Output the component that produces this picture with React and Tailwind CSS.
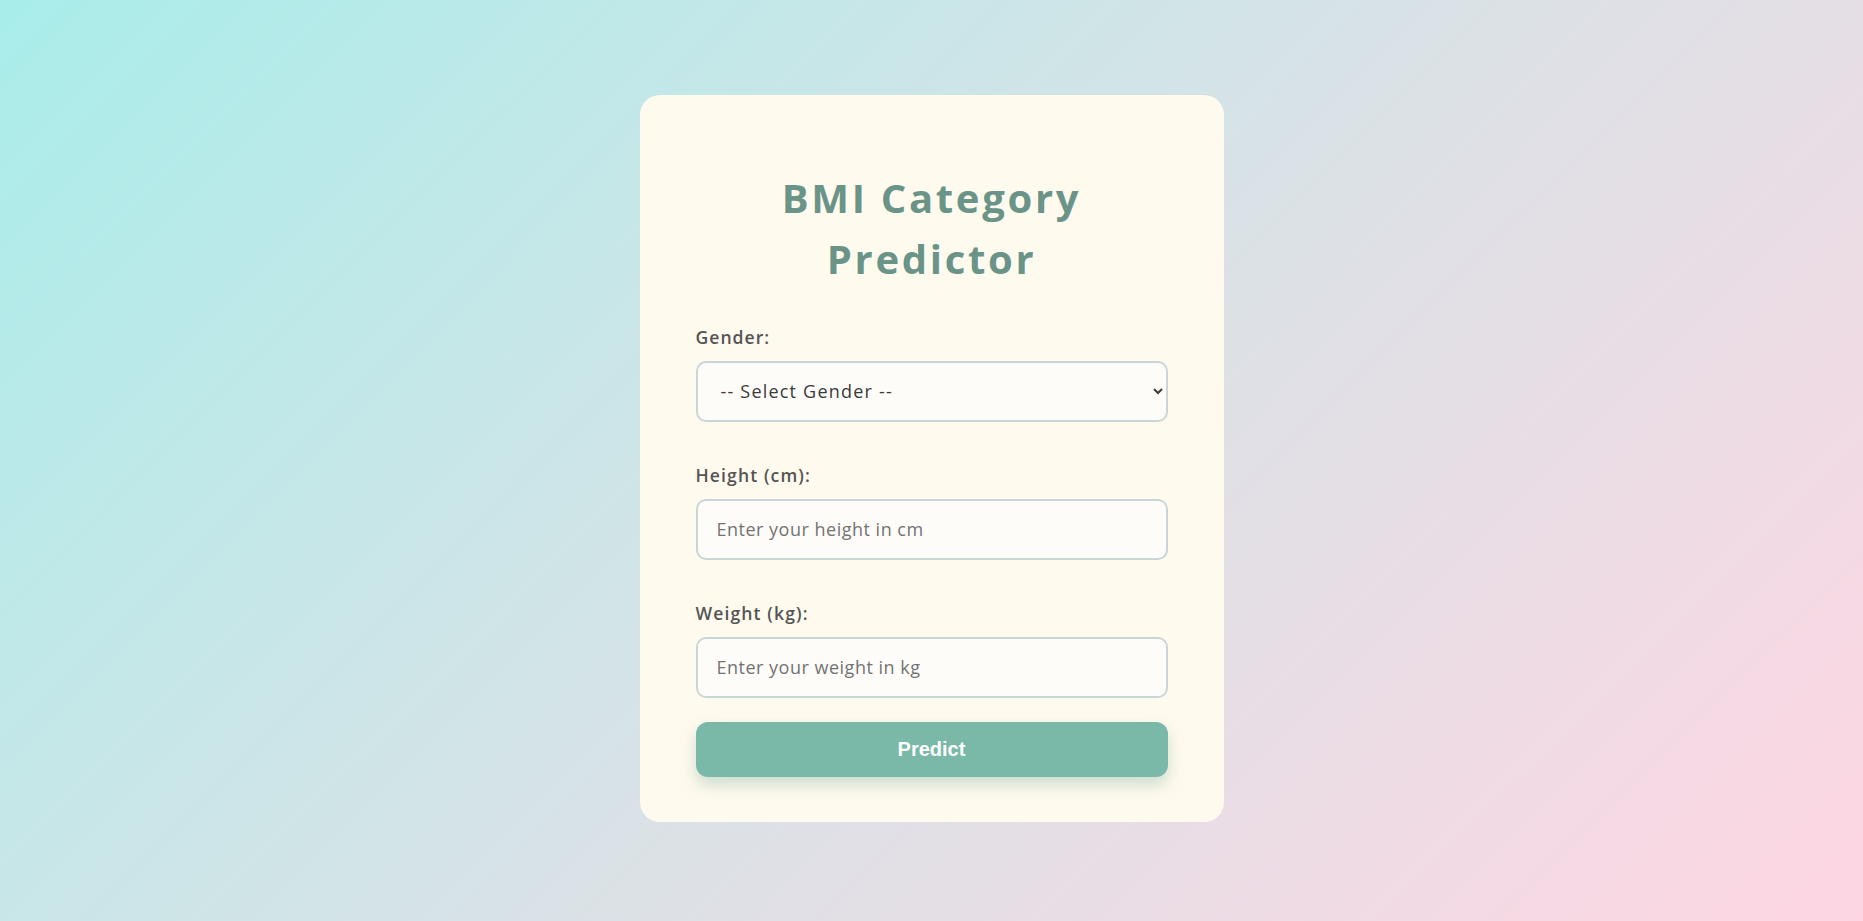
import React, { useState } from "react";

const App = () => {
  const [gender, setGender] = useState("");
  const [height, setHeight] = useState("");
  const [weight, setWeight] = useState("");

  const submit = (e) => {
    e.preventDefault();
  };

  return (
    <div className="min-h-screen w-full flex items-center justify-center pb-[5px] bg-linear-135 from-[#a8edea] to-[#fed6e3] font-['Open_Sans',sans-serif]">
      <div className="w-[584px] bg-[#fffaee] rounded-[20px] px-[56px] pt-[72px] pb-[45px]">
        <h1 className="text-center text-[40px] leading-[61px] font-bold tracking-[2.7px] text-[#6a9488] mb-[36px]">
          BMI Category
          <br />
          Predictor
        </h1>

        <form onSubmit={submit}>
          <div className="mb-[41px]">
            <label className="block text-[17.6px] leading-[24px] font-semibold text-[#555] mb-[12px] tracking-[1px]">
              Gender:
            </label>
            <select
              value={gender}
              onChange={(e) => setGender(e.target.value)}
              className="w-full h-[61px] pl-[19px] pr-[16px] border-2 border-[#c9d6d8] rounded-[10px] bg-[#fdfcf8] text-[18px] text-[#3a3a3a] tracking-[1.2px]"
            >
              <option value="">-- Select Gender --</option>
              <option value="Male">Male</option>
              <option value="Female">Female</option>
            </select>
          </div>

          <div className="mb-[41px]">
            <label className="block text-[17.6px] leading-[24px] font-semibold text-[#555] mb-[12px] tracking-[1.1px]">
              Height (cm):
            </label>
            <input
              type="number"
              value={height}
              onChange={(e) => setHeight(e.target.value)}
              placeholder="Enter your height in cm"
              className="w-full h-[61px] pl-[19px] pr-[17px] border-2 border-[#c9d6d8] rounded-[10px] bg-[#fdfcf8] text-[18px] text-[#333] placeholder:text-[#737373] tracking-[0.5px] outline-none"
            />
          </div>

          <div className="mb-[24px]">
            <label className="block text-[17.6px] leading-[24px] font-semibold text-[#555] mb-[12px] tracking-[1.1px]">
              Weight (kg):
            </label>
            <input
              type="number"
              value={weight}
              onChange={(e) => setWeight(e.target.value)}
              placeholder="Enter your weight in kg"
              className="w-full h-[61px] pl-[19px] pr-[17px] border-2 border-[#c9d6d8] rounded-[10px] bg-[#fdfcf8] text-[18px] text-[#333] placeholder:text-[#737373] tracking-[0.5px] outline-none"
            />
          </div>

          <button
            type="submit"
            className="w-full h-[55px] rounded-[12px] bg-[#7ab8a8] text-white text-[20px] font-bold font-['Liberation_Sans',Arial,sans-serif] shadow-[0_8px_16px_rgba(110,170,150,0.35)]"
          >
            Predict
          </button>
        </form>
      </div>
    </div>
  );
};

export default App;
